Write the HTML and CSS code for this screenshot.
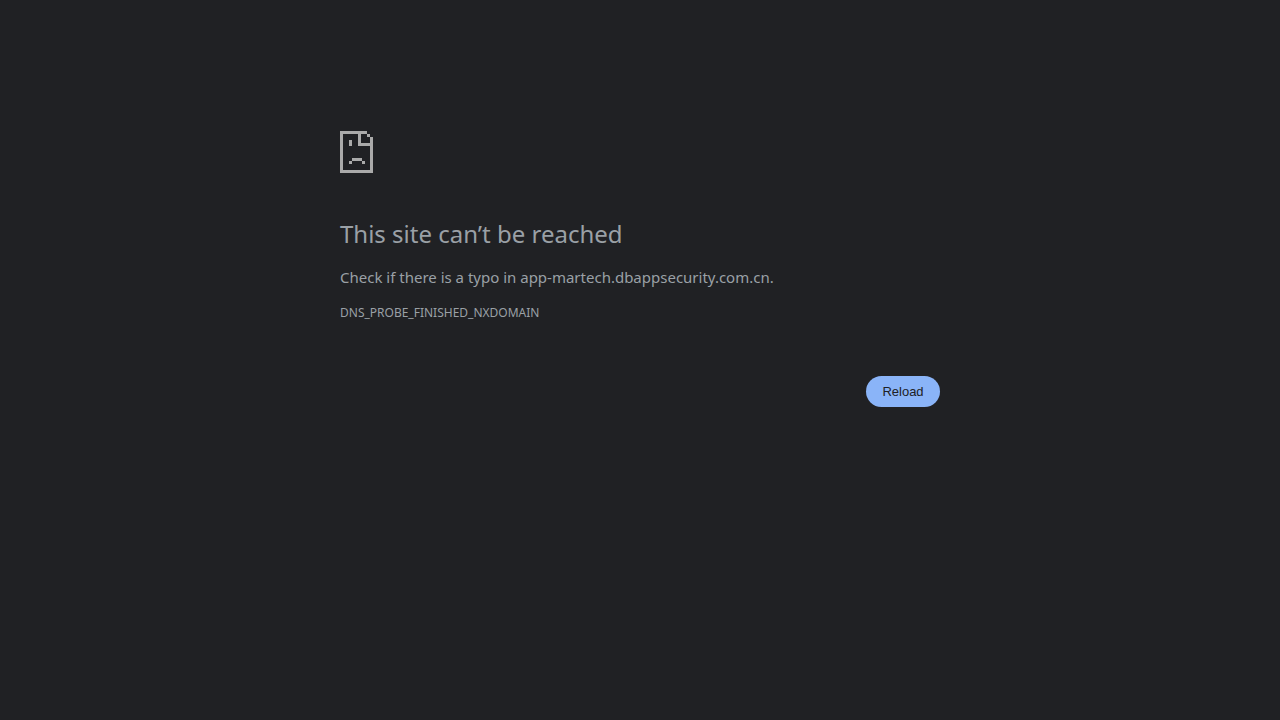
FILE: index.html
```html
<!DOCTYPE html>
<html lang="en">
<head>
<meta charset="utf-8">
<meta name="viewport" content="width=device-width, initial-scale=1">
<title>app-martech.dbappsecurity.com.cn</title>
<link rel="stylesheet" href="styles.css">
</head>

<body>
<main class="interstitial">
  <svg class="icon" viewBox="0 0 33 42" shape-rendering="crispEdges" aria-hidden="true">
    <!-- page outline -->
    <path d="M0 0h27v3H3v36h27V6h3v36H0z"/>
    <!-- folded corner -->
    <path d="M18 3h3v9h9v3H18zM27 3h3v3h-3z"/>
    <!-- face -->
    <path d="M9 9h3v6H9zM12 27h10v3H12zM9 30h3v3H9zM22 30h3v3h-3z"/>
  </svg>

  <h1>This site can’t be reached</h1>
  <p>Check if there is a typo in app-martech.dbappsecurity.com.cn.</p>
  <div class="error-code">DNS_PROBE_FINISHED_NXDOMAIN</div>

  <div class="buttons">
    <button type="button" class="reload" onclick="location.reload()">Reload</button>
  </div>
</main>
</body>
</html>
```
FILE: styles.css
```css
body {
  margin: 0;
  background: #202124;
  color: #9aa0a6;
  font-family: "Noto Sans", sans-serif;
  font-size: 15px;
  line-height: 24px;
}

.interstitial {
  max-width: 600px;
  margin: 0 auto;
  padding-top: 131px;
}

.icon {
  display: block;
  width: 33px;
  height: 42px;
  fill: #aaa;
}

h1 {
  margin: 46px 0 16px;
  font-size: 24px;
  font-weight: 400;
  line-height: 30px;
}

p {
  margin: 0;
}

.error-code {
  margin-top: 12px;
  font-size: 12px;
}

.buttons {
  display: flex;
  justify-content: flex-end;
  margin-top: 51px;
}

.reload {
  min-width: 74px;
  padding: 8px 16px;
  border: 0;
  border-radius: 20px;
  background: #8ab4f8;
  color: #202124;
  font-family: "Liberation Sans", Arial, sans-serif;
  font-size: 13px;
  line-height: 15px;
  cursor: pointer;
}

@media (max-width: 640px) {
  .interstitial {
    padding: 48px 24px;
  }
}
```
